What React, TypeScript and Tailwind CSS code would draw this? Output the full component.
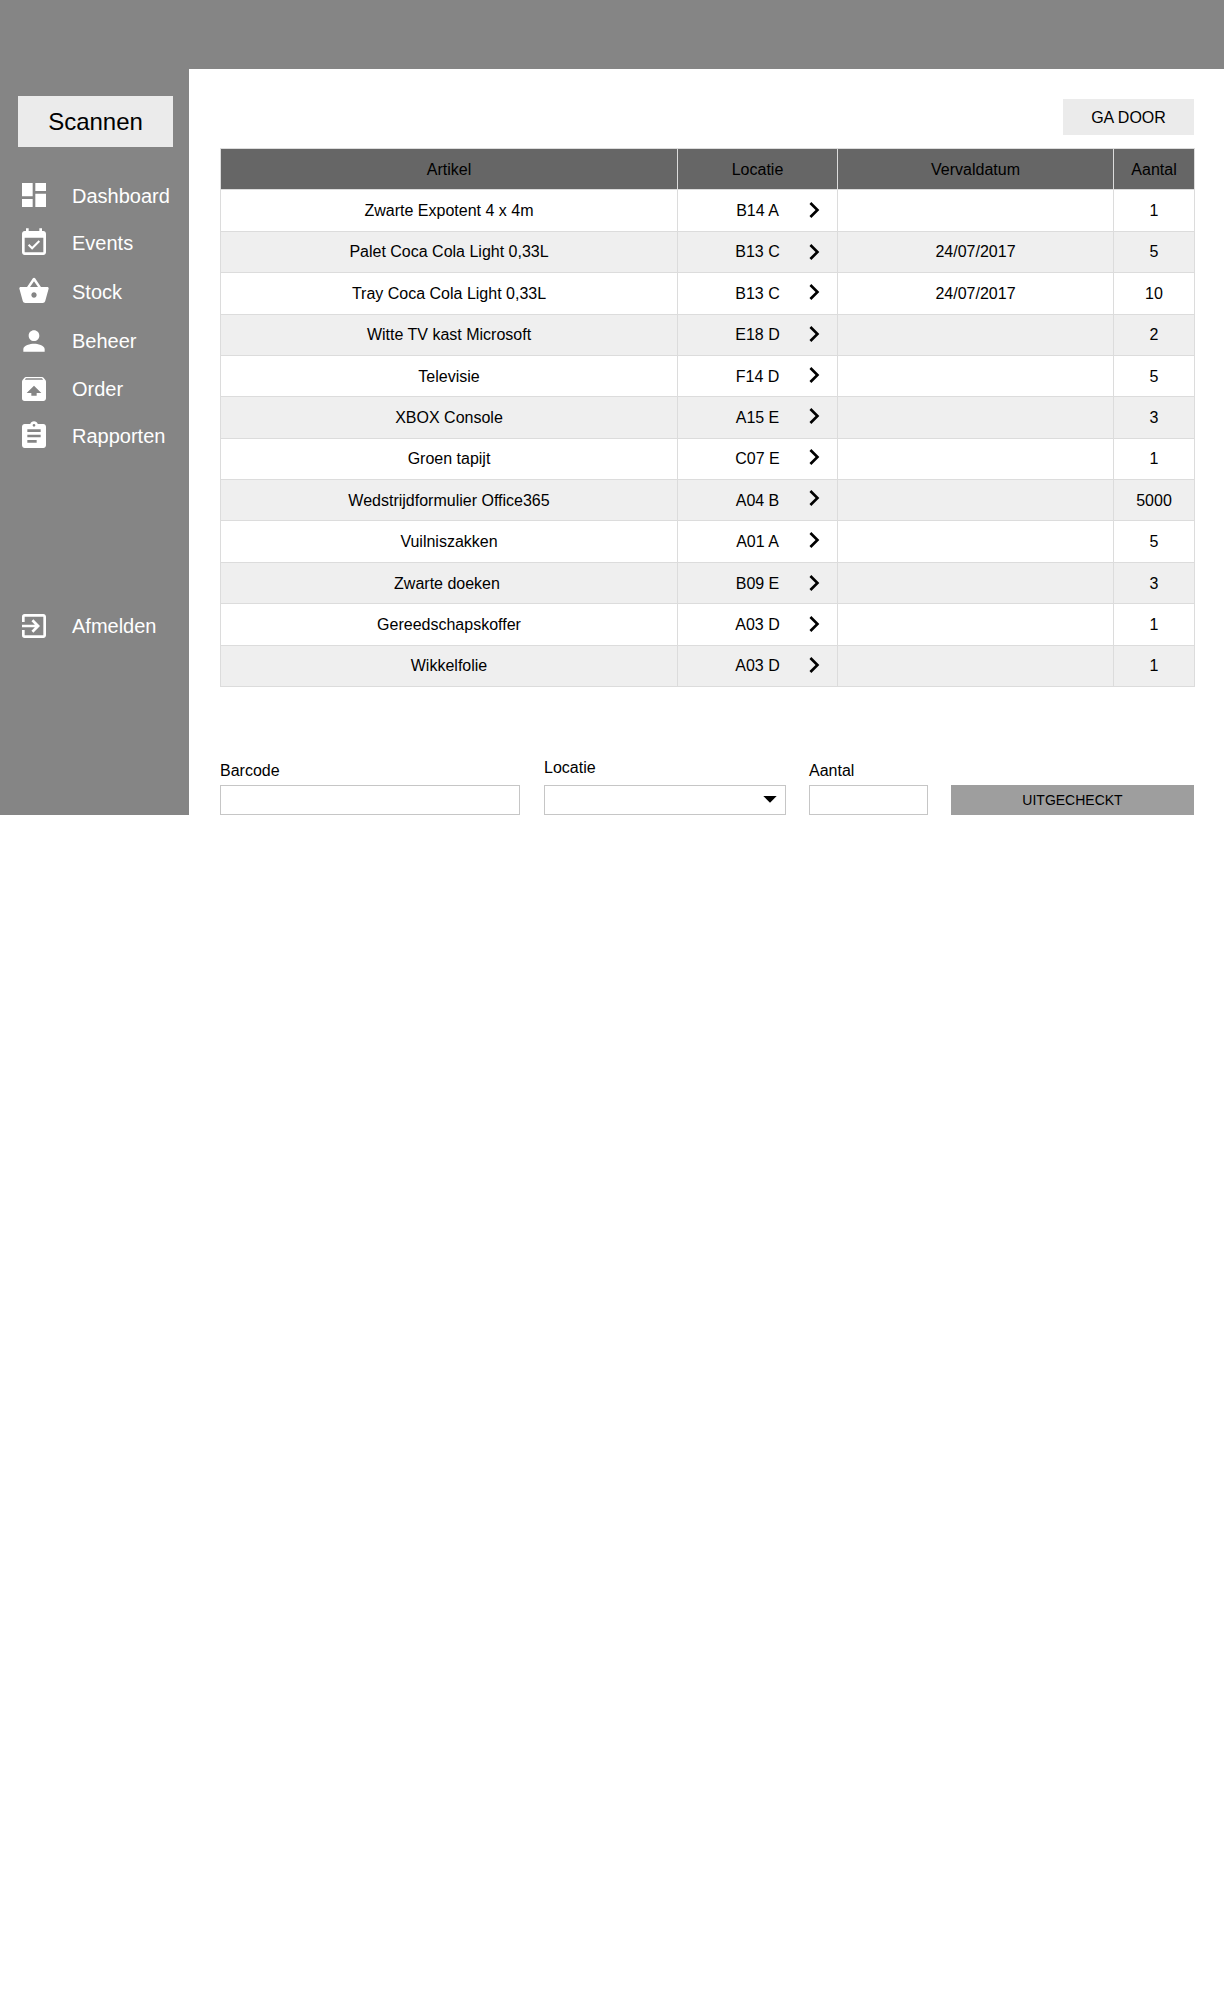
import React from "react";
import {
  MdAssignment,
  MdChevronRight,
  MdDashboard,
  MdExitToApp,
  MdPerson,
  MdShoppingBasket,
  MdUnarchive,
} from "react-icons/md";

function CalendarCheck({ size, className }: { size: number; className?: string }) {
  return (
    <svg width={size} height={size} viewBox="0 0 24 24" fill="currentColor" className={className}>
      <path d="M16.53 11.06L15.47 10l-4.88 4.88-2.12-2.12-1.06 1.06L10.59 17l5.94-5.94zM19 3h-1V1h-2v2H8V1H6v2H5c-1.11 0-1.99.9-1.99 2L3 19c0 1.1.89 2 2 2h14c1.1 0 2-.9 2-2V5c0-1.1-.9-2-2-2zm0 16H5V8h14v11z" />
    </svg>
  );
}

const nav = [
  { label: "Dashboard", Icon: MdDashboard, row: "", text: "mt-px" },
  { label: "Events", Icon: CalendarCheck, row: "mt-4", text: "" },
  { label: "Stock", Icon: MdShoppingBasket, row: "mt-4", text: "mt-px" },
  { label: "Beheer", Icon: MdPerson, row: "mt-[18px]", text: "" },
  { label: "Order", Icon: MdUnarchive, row: "mt-4", text: "" },
  { label: "Rapporten", Icon: MdAssignment, row: "mt-[15px]", text: "" },
  { label: "Afmelden", Icon: MdExitToApp, row: "mt-[158px]", text: "" },
];

const rows = [
  { item: "Zwarte Expotent 4 x 4m", loc: "B14 A", date: "", qty: "1", h: "h-[42px]", text: "", arrow: "mt-1" },
  { item: "Palet Coca Cola Light 0,33L", loc: "B13 C", date: "24/07/2017", qty: "5", h: "h-[41px]", text: "", arrow: "mt-1" },
  { item: "Tray Coca Cola Light 0,33L", loc: "B13 C", date: "24/07/2017", qty: "10", h: "h-[42px]", text: "", arrow: "mt-[3px]" },
  { item: "Witte TV kast Microsoft", loc: "E18 D", date: "", qty: "2", h: "h-[41px]", text: "", arrow: "mt-[3px]" },
  { item: "Televisie", loc: "F14 D", date: "", qty: "5", h: "h-[41px]", text: "pt-0.5", arrow: "mt-[3px]" },
  { item: "XBOX Console", loc: "A15 E", date: "", qty: "3", h: "h-[42px]", text: "", arrow: "mt-[3px]" },
  { item: "Groen tapijt", loc: "C07 E", date: "", qty: "1", h: "h-[41px]", text: "", arrow: "mt-0.5" },
  { item: "Wedstrijdformulier Office365", loc: "A04 B", date: "", qty: "5000", h: "h-[41px]", text: "pt-0.5", arrow: "mt-0.5" },
  { item: "Vuilniszakken", loc: "A01 A", date: "", qty: "5", h: "h-[42px]", text: "", arrow: "mt-[3px]" },
  { item: "Zwarte doeken", loc: "B09 E", date: "", qty: "3", h: "h-[41px]", text: "pt-0.5", arrow: "mt-1", nudge: "pr-1" },
  { item: "Gereedschapskoffer", loc: "A03 D", date: "", qty: "1", h: "h-[42px]", text: "", arrow: "mt-1" },
  { item: "Wikkelfolie", loc: "A03 D", date: "", qty: "1", h: "h-[41px]", text: "", arrow: "mt-[3px]" },
];

const cell = "flex items-center justify-center border-r border-[#dcdcdc]";

function Sidebar() {
  return (
    <aside className="h-[746px] w-[189px] shrink-0 bg-[#858585] pt-[27px]">
      <button className="ml-[18px] flex h-[51px] w-[155px] items-center justify-center bg-[#ebebeb] text-2xl text-black">
        Scannen
      </button>
      <nav className="mt-8 flex flex-col">
        {nav.map(({ label, Icon, row, text }) => (
          <a key={label} className={`flex h-8 pl-[18px] text-xl text-white ${row}`}>
            <Icon size={32} className="shrink-0" />
            <span className={`ml-[22px] h-8 leading-8 ${text}`}>{label}</span>
          </a>
        ))}
      </nav>
    </aside>
  );
}

function ArticleTable() {
  return (
    <div className="mt-[13px] w-[975px] border-l border-t border-[#dcdcdc]">
      <div className="grid h-[41px] grid-cols-[457px_160px_276px_81px] border-b border-[#dcdcdc] bg-[#666666]">
        <div className={`${cell} pt-0.5`}>Artikel</div>
        <div className={`${cell} pt-0.5`}>Locatie</div>
        <div className={`${cell} pt-0.5`}>Vervaldatum</div>
        <div className={`${cell} pt-0.5`}>Aantal</div>
      </div>
      {rows.map((r) => (
        <div
          key={r.item}
          className={`grid grid-cols-[457px_160px_276px_81px] border-b border-[#dcdcdc] even:bg-white odd:bg-[#efefef] ${r.h}`}
        >
          <div className={`${cell} ${r.text} ${r.nudge ?? ""}`}>{r.item}</div>
          <div className="grid grid-cols-[39px_1fr_39px] border-r border-[#dcdcdc]">
            <span />
            <span className={`flex items-center justify-center ${r.text}`}>{r.loc}</span>
            <MdChevronRight size={32} className={r.arrow} />
          </div>
          <div className={`${cell} ${r.text}`}>{r.date}</div>
          <div className={`${cell} ${r.text}`}>{r.qty}</div>
        </div>
      ))}
    </div>
  );
}

function CheckoutForm() {
  return (
    <form className="mt-[73px] flex h-[55px] items-end">
      <label className="flex w-[300px] flex-col">
        <span className="mb-[3px] leading-[22px]">Barcode</span>
        <input className="h-[30px] w-full border border-[#c6c6c6] bg-white" />
      </label>
      <label className="ml-6 flex w-[242px] flex-col">
        <span className="mb-1.5 leading-[22px]">Locatie</span>
        <span className="flex h-[30px] items-center justify-end border border-[#c6c6c6] bg-white pb-px pr-2">
          <svg width="14" height="7" viewBox="0 0 14 7">
            <path d="M0.3 0h13.4L7 6.7z" />
          </svg>
        </span>
      </label>
      <label className="ml-[23px] flex w-[119px] flex-col">
        <span className="mb-[3px] leading-[22px]">Aantal</span>
        <input className="h-[30px] w-full border border-[#c6c6c6] bg-white" />
      </label>
      <button type="button" className="ml-[23px] h-[30px] w-[243px] bg-[#9e9e9e] text-sm leading-[30px]">
        UITGECHECKT
      </button>
    </form>
  );
}

export default function App() {
  return (
    <div className="h-[2000px] w-[1224px] bg-white font-['Liberation_Sans',Arial,sans-serif] text-base text-black">
      <header className="h-[69px] bg-[#858585]" />
      <div className="flex">
        <Sidebar />
        <main className="ml-[31px] w-[975px] pt-[30px]">
          <button className="ml-[843px] flex h-9 w-[131px] items-center justify-center bg-[#ebebeb] pt-0.5">
            GA DOOR
          </button>
          <ArticleTable />
          <CheckoutForm />
        </main>
      </div>
    </div>
  );
}
